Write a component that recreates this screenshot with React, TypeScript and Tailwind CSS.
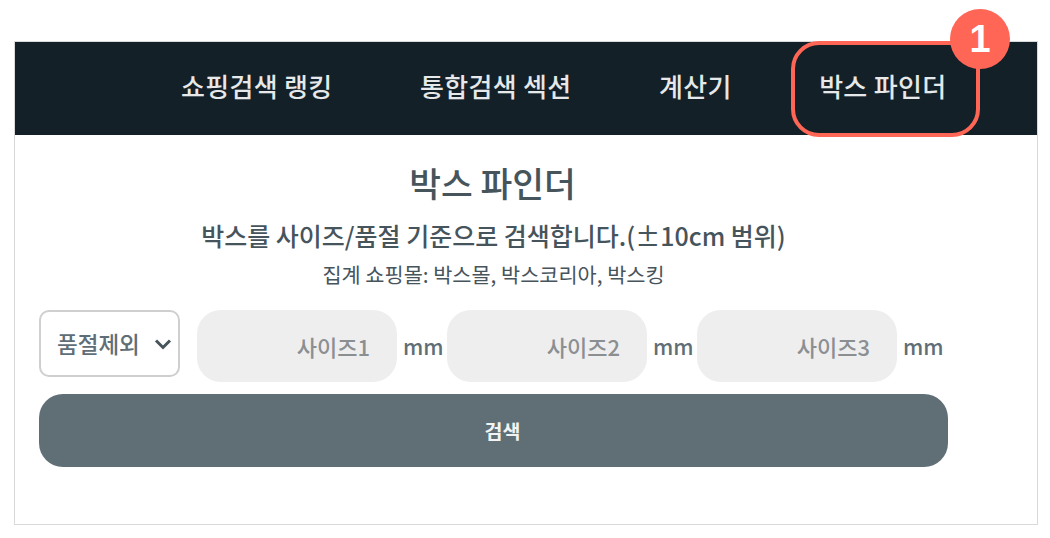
const FONT = "font-['Noto_Sans_CJK_KR','Noto_Sans',sans-serif]";

const NAV_ITEMS = ['쇼핑검색 랭킹', '통합검색 섹션', '계산기', '박스 파인더'];

const SizeField = ({ label }: { label: string }) => (
  <div className="flex items-center">
    <div className="flex h-[72px] w-[200px] items-center justify-end rounded-[24px] bg-[#eeeeee] pr-[27px] text-[22px] font-medium text-[#8b8f92]">
      {label}
    </div>
    <span className="ml-[6px] w-[44px] text-[21.5px] font-medium text-[#5f6e76]">mm</span>
  </div>
);

export default function App() {
  return (
    <div className={`${FONT} h-[538px] w-[1050px] overflow-hidden bg-white pl-[14px] pt-[41px]`}>
      <div className="relative h-[484px] w-[1024px] border border-[#d9d9d9]">
        {/* Top nav */}
        <nav className="flex h-[93px] items-center gap-[87.5px] bg-[#132028] pb-[6px] pl-[166px] text-[26px] font-medium tracking-[0.3px] text-[#e6e8e9]">
          {NAV_ITEMS.map((item) => (
            <span key={item}>{item}</span>
          ))}
        </nav>

        {/* Highlight callout */}
        <div className="absolute left-[776px] top-[-1px] h-[96px] w-[189px] rounded-[28px] border-[4px] border-[#ff6655]" />
        <div className="absolute left-[935px] top-[-33px] flex h-[60px] w-[60px] items-center justify-center rounded-full bg-[#ff6655] font-['Liberation_Sans',sans-serif] text-[38px] font-bold text-white">
          1
        </div>

        {/* Content */}
        <div className="ml-[24px] flex w-[909px] flex-col items-center pt-[23px] text-[#46545c]">
          <h1 className="pr-[2px] text-[34.5px] font-medium leading-[48px]">박스 파인더</h1>
          <p className="mt-[11px] text-[25px] font-medium leading-[36px]">박스를 사이즈/품절 기준으로 검색합니다.(±10cm 범위)</p>
          <p className="mt-[7px] text-[20.8px] leading-[28px]">집계 쇼핑몰: 박스몰, 박스코리아, 박스킹</p>

          <div className="mt-[22px] flex w-full items-start">
            <div className="mr-[17px] flex h-[67px] w-[141px] items-center justify-between rounded-[10px] border-2 border-[#cfcfcf] pl-[16px] pr-[6px] text-[22.5px] font-medium text-[#5f6e76]">
              <span>품절제외</span>
              <svg width="18" height="12" viewBox="0 0 18 12" fill="none">
                <path d="M2 2.5L9 9.5L16 2.5" stroke="#46545c" strokeWidth="3" />
              </svg>
            </div>
            <SizeField label="사이즈1" />
            <SizeField label="사이즈2" />
            <SizeField label="사이즈3" />
          </div>

          <button
            type="button"
            className="mt-[12px] h-[73px] w-full rounded-[24px] bg-[#606f76] pl-[18px] text-[19.5px] font-bold text-[#f2f3f3]"
          >
            검색
          </button>
        </div>
      </div>
    </div>
  );
}
